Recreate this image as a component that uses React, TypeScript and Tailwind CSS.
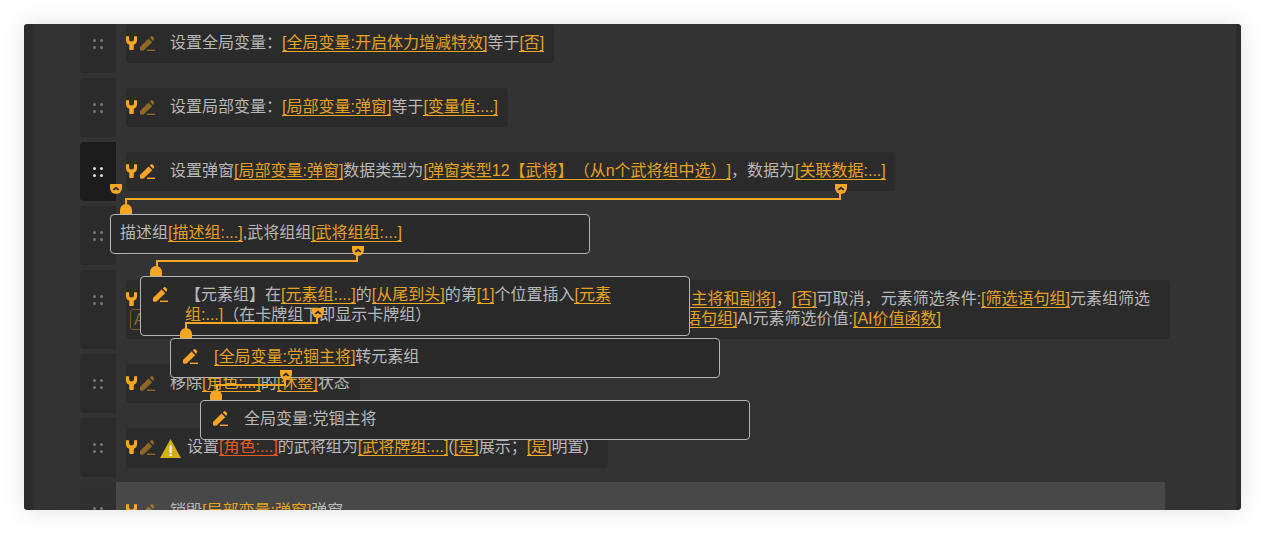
const orange = "text-[#e6a21f] border-b border-[#f5a623]";

// full-width punctuation
const COLON = "\uFF1A";
const COMMA = "\uFF0C";
const LP = "\uFF08";
const RP = "\uFF09";
const SEMI = "\uFF1B";

function Ref({ children }: { children: React.ReactNode }) {
  return <span className={orange}>{children}</span>;
}

function Wrench() {
  return (
    <svg width="11" height="14" viewBox="0 0 11 14" className="shrink-0">
      <path d="M0 0.3 L3 0.3 L3 3.2 A2.5 2.3 0 0 0 8 3.2 L8 0.3 L11 0.3 L11 4.2 C11 6.6 9.8 8 7.8 8.7 L7.8 13 Q7.8 14 6.8 14 L4.2 14 Q3.2 14 3.2 13 L3.2 8.7 C1.2 8 0 6.6 0 4.2 Z" fill="#f5a623" />
    </svg>
  );
}

function Pencil({ dim }: { dim?: boolean }) {
  return (
    <svg width="15" height="15" viewBox="0 0 15 15" className={dim ? "shrink-0 opacity-50" : "shrink-0"}>
      <path d="M0 11 L8.6 2.6 L12.2 6.2 L3.6 14.6 L1.2 14.8 Q0 14.8 0 13.6 Z" fill="#f5a623" />
      <path d="M9.8 1.6 L11.2 0.2 Q11.8 -0.2 12.4 0.2 L14 2 Q14.5 2.6 14 3.2 L13.2 5 Z" fill="#f5a623" />
      <rect x="7" y="13.6" width="8" height="1.4" fill="#f5a623" />
    </svg>
  );
}

function Dots({ active }: { active?: boolean }) {
  const c = active ? "w-[3px] h-[3px] rounded-full bg-[#dddddd]" : "w-[3px] h-[3px] rounded-full bg-[#777777]";
  return (
    <div className="grid grid-cols-2 gap-[4px] h-[10px]">
      <div className={c} /><div className={c} /><div className={c} /><div className={c} />
    </div>
  );
}

function Row({ children, active, hl, tall, blockW }: { children: React.ReactNode; active?: boolean; hl?: boolean; tall?: boolean; blockW?: string }) {
  return (
    <div className={tall ? "flex h-[79px]" : "flex h-[59px]"}>
      <div className={(active ? "bg-[#1c1c1c]" : hl ? "bg-[#303030]" : "bg-[#2b2b2b]") + " w-[36px] rounded-l-[4px] flex justify-center pt-[25px]"}>
        <Dots active={active} />
      </div>
      <div className={(hl ? "bg-[#484848]" : "") + " w-[1049px] pl-[10px] pt-[10px]"}>
        <div className={(hl ? "" : "bg-[#2b2b2b]") + " rounded-[4px] pt-[9px] pb-[10px] flex " + blockW}>
          {children}
        </div>
      </div>
    </div>
  );
}

function Icons({ active }: { active?: boolean }) {
  return (
    <div className="flex items-start gap-[3px] pt-[3px] shrink-0 h-[20px]">
      <Wrench />
      <Pencil dim={!active} />
    </div>
  );
}

function Badge({ className }: { className: string }) {
  return (
    <svg width="12" height="10" viewBox="0 0 12 10" className={"absolute z-20 " + className}>
      <path d="M0 0 H12 V4 A6 6 0 0 1 0 4 Z" fill="#f5a623" />
      <path d="M2.5 5.5 L6 2.5 L9.5 5.5 L8 6.5 L6 5 L4 6.5 Z" fill="#2b2b2b" />
    </svg>
  );
}

function Dome({ className }: { className: string }) {
  return <div className={"absolute z-20 w-[12px] h-[10px] bg-[#f5a623] rounded-t-full " + className} />;
}

function Line({ className }: { className: string }) {
  return <div className={"absolute z-20 bg-[#f5a623] " + className} />;
}

const boxCls = "absolute z-10 bg-[#2a2a2a] border border-[#b4b4b4] rounded-[4px] ";

export default function App() {
  return (
    <div className="w-[1265px] h-[534px] bg-white p-[24px] pb-0 font-['Liberation_Sans','Noto_Sans_CJK_SC',sans-serif] text-[16px] leading-[20px] text-[#b8b8b8] [text-spacing-trim:space-all]">
      <div className="relative w-[1217px] h-[486px] bg-[#333333] rounded-[3px] overflow-hidden shadow-[0_0_24px_rgba(0,0,0,0.12)] border-l-[9px] border-r-[5px] border-[#2b2b2b]">
        <div className="-mt-[10px] ml-[47px] flex flex-col gap-[5px]">
          <Row blockW="w-[428px]">
            <Icons />
            <div className="ml-[15px] whitespace-nowrap">设置全局变量{COLON}<Ref>[全局变量:开启体力增减特效]</Ref>等于<Ref>[否]</Ref></div>
          </Row>
          <Row blockW="w-[382px]">
            <Icons />
            <div className="ml-[15px] whitespace-nowrap">设置局部变量{COLON}<Ref>[局部变量:弹窗]</Ref>等于<Ref>[变量值:...]</Ref></div>
          </Row>
          <Row active blockW="w-[769px]">
            <Icons active />
            <div className="ml-[15px] whitespace-nowrap">设置弹窗<Ref>[局部变量:弹窗]</Ref>数据类型为<Ref>[弹窗类型12【武将】{LP}从n个武将组中选{RP}]</Ref>{COMMA}数据为<Ref>[关联数据:...]</Ref></div>
          </Row>
          <Row blockW="w-[300px]">
            <div className="h-[20px]" />
          </Row>
          <Row tall blockW="w-[1044px]">
            <div className="w-[44px] shrink-0 h-[40px]">
              <Icons />
              <div className="ml-[4px] w-[30px] h-[21px] rounded-[3px] border border-[#7a5c20] text-[#8a6a28] pl-[3px]">AI</div>
            </div>
            <div className="whitespace-nowrap">
              <div className="w-[980px] text-right">从<Ref>[元素组:...]</Ref>中选择<Ref>[1]</Ref>个元素{COMMA}<Ref>[元素类型:主将和副将]</Ref>{COMMA}<Ref>[否]</Ref>可取消{COMMA}元素筛选条件:<Ref>[筛选语句组]</Ref>元素组筛选</div>
              <div className="w-[771px] text-right">条件:<Ref>[筛选语句组]</Ref>AI元素筛选价值:<Ref>[AI价值函数]</Ref></div>
            </div>
          </Row>
          <Row blockW="w-[234px]">
            <Icons />
            <div className="ml-[15px] whitespace-nowrap">移除<Ref>[角色:...]</Ref>的<Ref>[休整]</Ref>状态</div>
          </Row>
          <Row blockW="w-[482px]">
            <Icons />
            <svg width="21" height="19" viewBox="0 0 21 19" className="ml-[5px] mt-[2px] shrink-0">
              <path d="M10.5 0 L21 19 H0 Z" fill="#d4b016" />
              <rect x="9.6" y="6.5" width="2" height="7.5" fill="#ffffff" />
              <rect x="9.6" y="15" width="2" height="2" fill="#ffffff" />
            </svg>
            <div className="ml-[6px] whitespace-nowrap">设置<span className="text-[#e8591c] border-b border-[#e8591c]">[角色:...]</span>的武将组为<Ref>[武将牌组:...]</Ref>(<Ref>[是]</Ref>展示{SEMI}<Ref>[是]</Ref>明置)</div>
          </Row>
          <Row hl>
            <Icons />
            <div className="ml-[15px] whitespace-nowrap">销毁<Ref>[局部变量:弹窗]</Ref>弹窗</div>
          </Row>
        </div>

        {/* floating blocks, offsets are from the panel's inner edge */}
        <div className={boxCls + "left-[77px] top-[190px] w-[480px] h-[40px] pl-[9px] pt-[8px] whitespace-nowrap"}>
          描述组<Ref>[描述组:...]</Ref>,武将组组<Ref>[武将组组:...]</Ref>
        </div>
        <div className={boxCls + "left-[107px] top-[252px] w-[550px] h-[60px] pl-[12px] pt-[8px] flex"}>
          <div className="pt-[2px] w-[32px] shrink-0"><Pencil /></div>
          <div className="w-[430px]">【元素组】在<Ref>[元素组:...]</Ref>的<Ref>[从尾到头]</Ref>的第<Ref>[1]</Ref>个位置插入<Ref>[元素组:...]</Ref>{LP}在卡牌组下即显示卡牌组{RP}</div>
        </div>
        <div className={boxCls + "left-[137px] top-[314px] w-[550px] h-[40px] pl-[12px] pt-[8px] flex whitespace-nowrap"}>
          <div className="pt-[2px] w-[31px] shrink-0"><Pencil /></div>
          <div><Ref>[全局变量:党锢主将]</Ref>转元素组</div>
        </div>
        <div className={boxCls + "left-[167px] top-[376px] w-[550px] h-[40px] pl-[12px] pt-[8px] flex whitespace-nowrap"}>
          <div className="pt-[2px] w-[31px] shrink-0"><Pencil /></div>
          <div>全局变量:党锢主将</div>
        </div>

        {/* connectors */}
        <Badge className="left-[77px] top-[160px]" />
        <Badge className="left-[802px] top-[160px]" />
        <Line className="left-[92px] top-[174px] w-[716px] h-[2px]" />
        <Line className="left-[806px] top-[168px] w-[2px] h-[8px]" />
        <Line className="left-[92px] top-[174px] w-[2px] h-[8px]" />
        <Dome className="left-[87px] top-[180px]" />

        <Badge className="left-[319px] top-[222px]" />
        <Line className="left-[123px] top-[236px] w-[202px] h-[2px]" />
        <Line className="left-[323px] top-[230px] w-[2px] h-[8px]" />
        <Line className="left-[123px] top-[236px] w-[2px] h-[8px]" />
        <Dome className="left-[117px] top-[242px]" />

        <Badge className="left-[279px] top-[284px]" />
        <Line className="left-[152px] top-[298px] w-[133px] h-[2px]" />
        <Line className="left-[283px] top-[292px] w-[2px] h-[8px]" />
        <Line className="left-[152px] top-[298px] w-[2px] h-[8px]" />
        <Dome className="left-[147px] top-[304px]" />

        <Badge className="left-[247px] top-[346px]" />
        <Line className="left-[183px] top-[360px] w-[70px] h-[2px]" />
        <Line className="left-[251px] top-[354px] w-[2px] h-[8px]" />
        <Line className="left-[183px] top-[360px] w-[2px] h-[8px]" />
        <Dome className="left-[177px] top-[366px]" />
      </div>
    </div>
  );
}
